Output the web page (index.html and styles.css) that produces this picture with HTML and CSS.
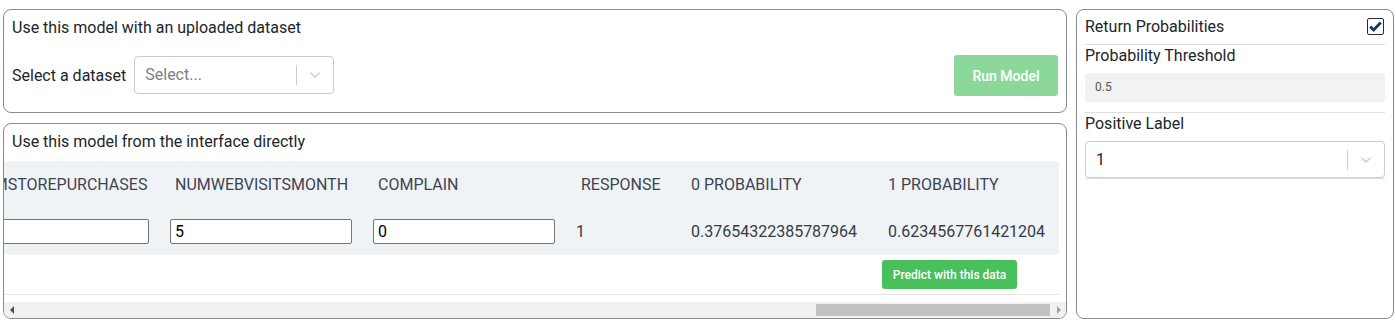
FILE: index.html
```html
<!DOCTYPE html>
<html lang="en">
<head>
<meta charset="utf-8">
<title>Model</title>
<link rel="stylesheet" href="styles.css">
</head>
<body>
<div class="page">
  <div class="main">
    <section class="panel upload">
      <div class="title">Use this model with an uploaded dataset</div>
      <div class="upload-row">
        <label class="field-label">Select a dataset</label>
        <div class="select dataset-select">
          <span class="placeholder">Select...</span>
          <span class="sep"></span>
          <svg class="chev" width="12" height="8" viewBox="0 0 12 8"><polyline points="1.5,1.8 6,6 10.5,1.8" fill="none" stroke="#cccccc" stroke-width="1.4"/></svg>
        </div>
        <button class="run-btn">Run Model</button>
      </div>
    </section>

    <section class="panel direct">
      <div class="title">Use this model from the interface directly</div>
      <div class="scroller">
        <div class="scroll-content">
          <table class="data">
            <thead>
              <tr>
                <th class="c-in">MNTGOLDPRODS</th>
                <th class="c-in">NUMDEALSPURCHASES</th>
                <th class="c-in">NUMWEBPURCHASES</th>
                <th class="c-in">NUMCATALOGPURCHASES</th>
                <th class="c-in">NUMSTOREPURCHASES</th>
                <th class="c-in">NUMWEBVISITSMONTH</th>
                <th class="c-in">COMPLAIN</th>
                <th class="c-resp">RESPONSE</th>
                <th class="c-p0">0 PROBABILITY</th>
                <th class="c-p1">1 PROBABILITY</th>
              </tr>
            </thead>
            <tbody>
              <tr>
                <td class="c-in"><input class="cell-input" type="text" value="" aria-label="mntgoldprods"></td>
                <td class="c-in"><input class="cell-input" type="text" value="" aria-label="numdealspurchases"></td>
                <td class="c-in"><input class="cell-input" type="text" value="" aria-label="numwebpurchases"></td>
                <td class="c-in"><input class="cell-input" type="text" value="" aria-label="numcatalogpurchases"></td>
                <td class="c-in"><input class="cell-input" type="text" value="" aria-label="numstorepurchases"></td>
                <td class="c-in"><input class="cell-input" type="text" value="5" aria-label="numwebvisitsmonth"></td>
                <td class="c-in"><input class="cell-input" type="text" value="0" aria-label="complain"></td>
                <td class="c-resp val">1</td>
                <td class="c-p0 val">0.37654322385787964</td>
                <td class="c-p1 val">0.6234567761421204</td>
              </tr>
            </tbody>
            <tfoot>
              <tr>
                <td colspan="9"></td>
                <td class="foot-cell"><button class="predict-btn">Predict with this data</button></td>
              </tr>
            </tfoot>
          </table>
        </div>
      </div>
      <div class="hscroll">
        <span class="arrow arrow-left"></span>
        <div class="track"><div class="thumb"></div></div>
        <span class="arrow arrow-right"></span>
      </div>
    </section>
  </div>

  <aside class="panel side">
    <div class="side-row check-row">
      <span class="side-label">Return Probabilities</span>
      <span class="checkbox">
        <svg width="15" height="15" viewBox="0 0 15 15"><path d="M2.2 7.6 L5.6 11 L12.8 3.6" fill="none" stroke="#1c3764" stroke-width="2.8" stroke-linejoin="miter"/></svg>
      </span>
    </div>
    <div class="side-row section">
      <div class="side-label">Probability Threshold</div>
      <div class="thresh-input">0.5</div>
    </div>
    <div class="side-row section">
      <div class="side-label">Positive Label</div>
      <div class="select label-select">
        <span class="value">1</span>
        <span class="sep"></span>
        <svg class="chev" width="12" height="8" viewBox="0 0 12 8"><polyline points="1.5,1.8 6,6 10.5,1.8" fill="none" stroke="#cccccc" stroke-width="1.4"/></svg>
      </div>
    </div>
  </aside>
</div>
</body>
</html>
```

FILE: styles.css
```css
* { box-sizing: border-box; }

html, body {
  margin: 0;
  padding: 0;
  background: #ffffff;
  font-family: Roboto, "Liberation Sans", Arial, sans-serif;
  color: #212529;
}

.page {
  display: grid;
  grid-template-columns: 1064px 318px;
  column-gap: 9px;
  padding: 9px 2px 10px 3px;
  height: 329px;
}

.main {
  display: flex;
  flex-direction: column;
  gap: 10px;
  min-width: 0;
}

.panel {
  border: 1px solid #8a8a8a;
  border-radius: 8px;
  background: #fff;
}

.title {
  font-size: 16px;
  line-height: 20px;
  color: #212529;
}

/* ---------- upload panel ---------- */
.upload {
  padding: 8px 8px 16px 8px;
  height: 104px;
}

.upload-row {
  display: flex;
  align-items: center;
  margin-top: 17px;
  height: 41px;
}

.field-label {
  font-size: 16px;
  color: #212529;
  margin-right: 8px;
}

.select {
  display: flex;
  align-items: center;
  border: 1px solid #cccccc;
  border-radius: 4px;
  background: #fff;
}

.dataset-select {
  width: 200px;
  height: 38px;
  padding-left: 10px;
  margin-top: -2px;
}

.placeholder {
  flex: 1;
  font-size: 16px;
  color: #808080;
}

.sep {
  width: 1px;
  height: 20px;
  background: #cccccc;
}

.chev {
  margin: 0 12px 0 12px;
}

.run-btn {
  margin-left: auto;
  width: 104px;
  height: 41px;
  border: none;
  border-radius: 3px;
  background: #8cd89a;
  color: #ffffff;
  font-family: Roboto, "Liberation Sans", Arial, sans-serif;
  font-size: 14px;
  font-weight: 500;
}

/* ---------- direct panel ---------- */
.direct {
  flex: 1;
  display: flex;
  flex-direction: column;
  min-height: 0;
  overflow: hidden;
}

.direct .title {
  padding: 8px 8px 9px 8px;
}

.scroller {
  display: flex;
  justify-content: flex-end;
  overflow: hidden;
}

.scroll-content {
  flex: none;
  padding: 0 7px 7px 0;
}

.data {
  border-collapse: collapse;
  table-layout: fixed;
  font-size: 16px;
}

.data thead tr,
.data tbody tr {
  background: #f0f3f6;
}

.data th {
  height: 46px;
  padding: 0 0 0 15px;
  text-align: left;
  font-weight: 400;
  color: #3c4452;
  white-space: nowrap;
}

.data tbody td {
  height: 48px;
  padding: 0 0 0 10px;
  color: #353b44;
  white-space: nowrap;
}

.c-in { width: 203px; }
.c-resp { width: 110px; }
.c-p0 { width: 197px; }
.c-p1 { width: 186px; }

.data tbody td.c-p0,
.data tbody td.c-p1 {
  padding-left: 15px;
}

.cell-input {
  display: block;
  width: 182px;
  height: 25px;
  border: 1px solid #767676;
  border-radius: 2px;
  padding: 0 4px;
  font-family: Roboto, "Liberation Sans", Arial, sans-serif;
  font-size: 16px;
  color: #000;
  background: #fff;
}

.data tfoot tr {
  border-bottom: 1px solid #e6e6e6;
}

.data tfoot td {
  height: 39px;
  padding: 0;
}

.data tfoot td.foot-cell {
  padding: 0 0 0 9px;
  vertical-align: top;
}

.predict-btn {
  display: block;
  margin-top: 5px;
  width: 135px;
  height: 29px;
  border: none;
  border-radius: 3px;
  background: #48c05b;
  color: #fff;
  font-family: Roboto, "Liberation Sans", Arial, sans-serif;
  font-size: 12px;
  font-weight: 500;
  white-space: nowrap;
}

/* fake horizontal scrollbar */
.hscroll {
  display: flex;
  align-items: center;
  height: 16px;
  background: #f1f1f1;
}

.arrow {
  width: 15px;
  height: 16px;
  display: flex;
  align-items: center;
  justify-content: center;
}

.arrow::before {
  content: "";
  width: 0;
  height: 0;
  border-top: 4px solid transparent;
  border-bottom: 4px solid transparent;
}

.arrow-left::before {
  border-right: 4px solid #505050;
}

.arrow-right::before {
  border-left: 4px solid #a3a3a3;
}

.track {
  flex: 1;
  height: 16px;
  display: flex;
  align-items: center;
  justify-content: flex-end;
  padding-right: 1px;
}

.thumb {
  width: 234px;
  height: 12px;
  background: #c1c1c1;
}

/* ---------- side panel ---------- */
.side {
  padding: 0 8px;
}

.side-row {
  border-bottom: 1px solid #dedede;
}

.check-row {
  display: flex;
  align-items: center;
  justify-content: space-between;
  padding: 7px 0 8px 0;
}

.side-label {
  font-size: 16px;
  line-height: 19px;
  color: #212529;
}

.checkbox {
  width: 17px;
  height: 17px;
  border: 1px solid #2b2b2b;
  border-radius: 2px;
  display: flex;
  align-items: center;
  justify-content: center;
  margin-right: 1px;
  background: #fff;
}

.section {
  padding: 1px 0 10px 0;
}

.section .side-label {
  margin-bottom: 8px;
}

.thresh-input {
  height: 29px;
  background: #f2f2f2;
  border-radius: 3px;
  padding-left: 10px;
  font-size: 12px;
  line-height: 29px;
  color: #555;
}

.side-row.section:last-child {
  padding-bottom: 0;
}

.label-select {
  height: 37px;
  padding-left: 10px;
}

.label-select .value {
  flex: 1;
  font-size: 16px;
  color: #212529;
}
```
